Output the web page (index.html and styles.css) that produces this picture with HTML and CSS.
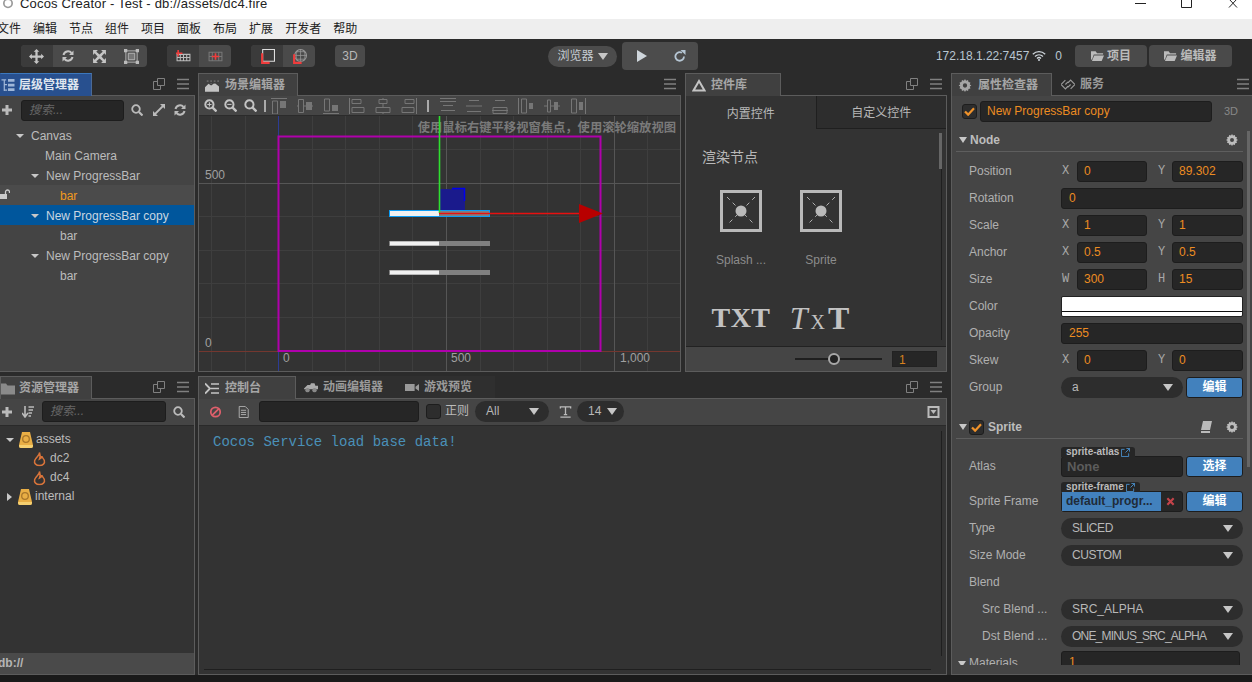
FILE: index.html
```html
<!DOCTYPE html>
<html lang="zh">
<head>
<meta charset="utf-8">
<title>Cocos Creator</title>
<link rel="stylesheet" href="styles.css">
</head>
<body>
<svg class="sprite" aria-hidden="true">
  <symbol id="i-popout" viewBox="0 0 12 12"><path d="M4.500 .5h7v7h-7z M4.500 3.500h-4v8h7v-4" fill="none" stroke="currentColor"/></symbol>
  <symbol id="i-menu" viewBox="0 0 12 12"><path d="M0 1.500h12M0 6h12M0 10.500h12" stroke="currentColor" stroke-width="1.400"/></symbol>
  <symbol id="i-gear" viewBox="0 0 12 12"><path d="M6 0l1 1.600 1.800-.6.400 1.800 1.800.4-.6 1.800L12 6l-1.600 1 .6 1.800-1.800.4-.4 1.800-1.800-.6L6 12l-1-1.600-1.800.6-.4-1.800L1 8.800 1.600 7 0 6l1.600-1L1 3.200l1.800-.4.400-1.800 1.800.6zM6 4a2 2 0 1 0 0 4 2 2 0 0 0 0-4z" fill="currentColor" fill-rule="evenodd"/></symbol>
  <symbol id="i-search" viewBox="0 0 12 12"><circle cx="5" cy="5" r="3.800" fill="none" stroke="currentColor" stroke-width="1.800"/><path d="M8 8l3.500 3.500" stroke="currentColor" stroke-width="2.200"/></symbol>
  <symbol id="i-plus" viewBox="0 0 12 12"><path d="M6 1v10M1 6h10" stroke="currentColor" stroke-width="3"/></symbol>
  <symbol id="i-sync" viewBox="0 0 12 12"><path d="M1.500 5A4.600 4.600 0 0 1 9.500 3M10.500 7A4.600 4.600 0 0 1 2.500 9" fill="none" stroke="currentColor" stroke-width="2"/><path d="M11.500 .5v4.500H7zM.5 11.500V7H5z" fill="currentColor"/></symbol>
  <symbol id="i-expand" viewBox="0 0 12 12"><path d="M2 10l8-8" stroke="currentColor" stroke-width="1.800"/><path d="M7 0h5v5zM0 7v5h5z" fill="currentColor"/></symbol>
  <symbol id="i-folder" viewBox="0 0 14 12"><path d="M0 1h5l1.500 2H13v1.500H3L1 10l-1-.5z M3.500 5.500H14L11.500 11.500H1z" fill="currentColor"/></symbol>
  <symbol id="i-flame" viewBox="0 0 14 16"><path d="M7 1C7.500 4 3 6 1.800 9.500 .8 12.800 3.500 15 7 15s6.200-2.200 5.200-5.500C11.500 7.500 10 7 9.500 5 9 7 8 7.500 7 8c.8-2 .8-5 0-7z" fill="none" stroke="#d9743a" stroke-width="1.600"/></symbol>
  <symbol id="i-db" viewBox="0 0 14 16"><path d="M3 0h8l3 13v1a2 2 0 0 1-2 2H2a2 2 0 0 1-2-2v-1z" fill="#e9ae45"/><path d="M0 13h14v1a2 2 0 0 1-2 2H2a2 2 0 0 1-2-2z" fill="#f5cf70"/><circle cx="7" cy="7" r="3.300" fill="none" stroke="#a8762a" stroke-width="1.300"/></symbol>
  <symbol id="i-node" viewBox="0 0 42 42"><path d="M1.500 1.500h39v39h-39z" fill="none" stroke="#b9b9b9" stroke-width="3"/><path d="M7 7l27 27M35 7L7 35" stroke="#b0b0b0" stroke-dasharray="4 4"/><circle cx="21" cy="21" r="5.500" fill="#b9b9b9"/></symbol>
</svg>

<div class="app">
  <header class="titlebar">
    <svg class="app-logo" viewBox="0 0 12 12"><circle cx="6" cy="4" r="5" fill="none" stroke="#999" stroke-width="2"/></svg>
    <span class="title-text">Cocos Creator - Test - db://assets/dc4.fire</span>
    <div class="window-controls">
      <svg viewBox="0 0 11 8"><path d="M0 3.500h11" stroke="#222"/></svg>
      <svg viewBox="0 0 11 8"><path d="M.5 -1v8.500h10V-1" fill="none" stroke="#222"/></svg>
      <svg viewBox="0 0 11 8"><path d="M2 -1l8 8.500M10 -1L2 7.500" stroke="#222"/></svg>
    </div>
  </header>

  <nav class="menubar">
    <span>文件</span><span>编辑</span><span>节点</span><span>组件</span><span>项目</span><span>面板</span><span>布局</span><span>扩展</span><span>开发者</span><span>帮助</span>
  </nav>

  <div class="toolbar">
    <div class="tool-group four">
      <button class="tool on"><svg viewBox="0 0 16 16"><path d="M8 0l3 3H9.200v3.800H13V5l3 3-3 3V9.200H9.200V13H11l-3 3-3-3h1.800V9.200H3V11L0 8l3-3v1.800h3.800V3H5z" fill="#c4c4c4"/></svg></button>
      <button class="tool"><svg class="sm" viewBox="0 0 12 12"><use href="#i-sync"/></svg></button>
      <button class="tool"><svg viewBox="0 0 14 14"><path d="M1 1h4.500L4 2.500 7 5.200 10 2.500 8.500 1H13v4.500L11.500 4 8.800 7l2.700 3L13 8.500V13H8.500L10 11.500 7 8.800 4 11.500 5.500 13H1V8.500L2.500 10 5.200 7 2.500 4 1 5.500z" fill="#c4c4c4"/></svg></button>
      <button class="tool"><svg viewBox="0 0 16 16"><path d="M2 2h12v12H2z" fill="none" stroke="#bbb"/><path d="M4.500 4.500h7v7h-7z" fill="#777" stroke="#bbb"/><path d="M0 0h3.500v3.500H0zM12.500 0H16v3.500h-3.500zM0 12.500h3.500V16H0zM12.500 12.500H16V16h-3.500z" fill="#bbb"/></svg></button>
    </div>
    <div class="tool-group two">
      <button class="tool on"><svg viewBox="0 0 14 12"><path d="M1 4h12v6H1z M1 7h12 M4 4v6M7 4v6M10 4v6" fill="none" stroke="#bbb"/><path d="M2 0v6M0 3h6" stroke="#f03c3c" stroke-width="1.500"/></svg></button>
      <button class="tool"><svg viewBox="0 0 14 12"><path d="M1 2h12v8H1z M1 6h12 M4 2v8M10 2v8" fill="none" stroke="#777"/><path d="M7 3v6M3.500 6h7" stroke="#f03c3c" stroke-width="1.500"/></svg></button>
    </div>
    <div class="tool-group two">
      <button class="tool on"><svg viewBox="0 0 14 14"><path d="M2.500 .5h11v11h-11z" fill="none" stroke="#ddd"/><path d="M2 4v9h7" fill="none" stroke="#f03c3c" stroke-width="2"/></svg></button>
      <button class="tool"><svg viewBox="0 0 14 14"><circle cx="8" cy="6" r="5.500" fill="none" stroke="#999"/><path d="M2.500 6h11M8 .5v11M4 2.500h8M4 9.500h8M5 1.500C3.500 5 3.500 8 5 11M11 1.500c1.500 3.500 1.500 6.500 0 9.500" fill="none" stroke="#999" stroke-width=".7"/><path d="M2 5v8h7" fill="none" stroke="#f03c3c" stroke-width="2"/></svg></button>
    </div>
    <button class="tool-3d">3D</button>
    <button class="browser-pill">浏览器<i class="caret light"></i></button>
    <div class="play-group">
      <svg viewBox="0 0 12 12"><path d="M1 0l10 6-10 6z" fill="#cfd6dc"/></svg>
      <svg viewBox="0 0 12 12"><path d="M10 6.500A4.300 4.300 0 1 1 8 2.800" fill="none" stroke="#b6c6d4" stroke-width="1.800"/><path d="M6.500 0h5v5z" fill="#b6c6d4"/></svg>
    </div>
    <div class="net">
      <span class="ip">172.18.1.22:7457</span>
      <svg class="wifi" viewBox="0 0 14 10"><path d="M.8 3.200a9 9 0 0 1 12.400 0M3 5.400a6 6 0 0 1 8 0M5 7.400a3 3 0 0 1 4 0" fill="none" stroke="#cfd6dc" stroke-width="1.300"/><circle cx="7" cy="9" r="1" fill="#cfd6dc"/></svg>
      <span class="count">0</span>
    </div>
    <button class="open-btn project"><svg class="ic14" viewBox="0 0 14 12"><use href="#i-folder"/></svg>项目</button>
    <button class="open-btn editor"><svg class="ic14" viewBox="0 0 14 12"><use href="#i-folder"/></svg>编辑器</button>
  </div>

  <main class="workspace">
    <div class="col-left">
      <section class="panel panel-hierarchy">
        <div class="tabs">
          <div class="tab tab-blue w92"><svg class="tab-ic" viewBox="0 0 14 14"><path d="M0 1h5M3 1v12M3 6h3M3 12h3" stroke="#9fb7d8" stroke-width="1.300" fill="none"/><path d="M7 0h7v3H7zM7 5h7v3H7zM7 10h7v3H7z" fill="#9fb7d8"/></svg>层级管理器</div>
          <div class="tab-actions left-actions"><svg viewBox="0 0 12 12"><use href="#i-popout"/></svg><svg viewBox="0 0 12 12"><use href="#i-menu"/></svg></div>
        </div>
        <div class="panel-body body-mid">
          <div class="bar bar-hier">
            <svg class="ic12 plus" viewBox="0 0 12 12"><use href="#i-plus"/></svg>
            <div class="search search-hier">搜索...</div>
            <svg class="ic12" viewBox="0 0 12 12"><use href="#i-search"/></svg>
            <svg class="ic12" viewBox="0 0 12 12"><use href="#i-expand"/></svg>
            <svg class="ic12" viewBox="0 0 12 12"><use href="#i-sync"/></svg>
          </div>
          <ul class="tree">
            <li class="d1"><i class="caret"></i>Canvas</li>
            <li class="d2">Main Camera</li>
            <li class="d2 has-caret"><i class="caret"></i>New ProgressBar</li>
            <li class="d3 hover"><svg class="lock" viewBox="0 0 10 10"><path d="M5.500 5V3a2 2 0 0 1 4 0v1" fill="none" stroke="#ccc" stroke-width="1.300"/><path d="M0 5h7v5H0z" fill="#ccc"/></svg>bar</li>
            <li class="d2 has-caret selected"><i class="caret"></i>New ProgressBar copy</li>
            <li class="d3">bar</li>
            <li class="d2 has-caret"><i class="caret"></i>New ProgressBar copy</li>
            <li class="d3">bar</li>
          </ul>
        </div>
      </section>

      <section class="panel panel-assets">
        <div class="tabs">
          <div class="tab w92"><svg class="tab-ic folder-ic" viewBox="0 0 14 12"><path d="M0 1h5l1.500 2H14v9H0z" fill="currentColor"/></svg>资源管理器</div>
          <div class="tab-actions left-actions"><svg viewBox="0 0 12 12"><use href="#i-popout"/></svg><svg viewBox="0 0 12 12"><use href="#i-menu"/></svg></div>
        </div>
        <div class="panel-body body-dark">
          <div class="bar bar-assets">
            <svg class="ic12 plus" viewBox="0 0 12 12"><use href="#i-plus"/></svg>
            <svg class="ic12" viewBox="0 0 12 12"><path d="M3 0v10M0 7l3 4 3-4" fill="none" stroke="currentColor" stroke-width="1.600"/><path d="M6.500 1H12M6.500 4h4.500M6.500 7H10M6.500 10H9" stroke="currentColor" stroke-width="1.400"/></svg>
            <div class="search search-assets">搜索...</div>
            <svg class="ic12" viewBox="0 0 12 12"><use href="#i-search"/></svg>
          </div>
          <ul class="asset-tree">
            <li class="a1"><i class="caret"></i><svg class="db" viewBox="0 0 14 16"><use href="#i-db"/></svg>assets</li>
            <li class="a2"><svg class="fire" viewBox="0 0 14 16"><use href="#i-flame"/></svg>dc2</li>
            <li class="a2"><svg class="fire" viewBox="0 0 14 16"><use href="#i-flame"/></svg>dc4</li>
            <li class="a1"><i class="caret right"></i><svg class="db" viewBox="0 0 14 16"><use href="#i-db"/></svg>internal</li>
          </ul>
          <footer class="db-path">db://</footer>
        </div>
      </section>
    </div>

    <div class="col-center">
      <div class="row-top">
        <section class="panel panel-scene">
          <div class="tabs">
            <div class="tab w100"><svg class="tab-ic" viewBox="0 0 16 14"><path d="M0 14V9l4-4 3 2 4-3 5 4v6z" fill="#c4c4c4"/><path d="M2 1h2v2H2zM6 1h2v2H6zM10 1h2v2h-2zM14 1h2v2h-2zM6 4h2v1H6zM10 4h2v1h-2z" fill="#666"/></svg>场景编辑器</div>
            <div class="tab-actions"><svg viewBox="0 0 12 12"><use href="#i-menu"/></svg></div>
          </div>
          <div class="panel-body">
            <div class="scene-tools">
              <svg class="zoom-ic" viewBox="0 0 12 12"><use href="#i-search"/><path d="M3 5h4M5 3v4" stroke="#c4c4c4"/></svg>
              <svg class="zoom-ic" viewBox="0 0 12 12"><use href="#i-search"/><path d="M3 5h4" stroke="#c4c4c4"/></svg>
              <svg class="zoom-ic" viewBox="0 0 12 12"><use href="#i-search"/></svg>
              <i class="tool-sep"></i>
              <svg class="align" viewBox="0 0 16 16"><path d="M0 .5h16M1.500 3h5v13h-5z" fill="none" stroke="currentColor"/><path d="M9 3h6v7H9z" fill="currentColor"/></svg>
              <svg class="align" viewBox="0 0 16 16"><path d="M0 8h16" stroke="currentColor"/><path d="M1.500 1.500h5v13h-5z" fill="#454545" stroke="currentColor"/><path d="M9 4h6v8H9z" fill="currentColor"/></svg>
              <svg class="align" viewBox="0 0 16 16"><path d="M0 15.500h16M1.500 1h5v12h-5z" fill="none" stroke="currentColor"/><path d="M9 7h6v6H9z" fill="currentColor"/></svg>
              <svg class="align" viewBox="0 0 16 16"><path d="M.5 0v16M3 1.500h9v4H3zM3 9.500h12v5H3z" fill="none" stroke="currentColor"/></svg>
              <svg class="align" viewBox="0 0 16 16"><path d="M8 0v16" stroke="currentColor"/><path d="M4 1.500h8v4H4zM1 9.500h14v5H1z" fill="#454545" stroke="currentColor"/></svg>
              <svg class="align" viewBox="0 0 16 16"><path d="M15.500 0v16M4 1.500h9v4H4zM1 9.500h12v5H1z" fill="none" stroke="currentColor"/></svg>
              <i class="tool-sep sep-end"></i>
              <svg class="align" viewBox="0 0 16 16"><path d="M0 .5h16M0 3.500h16M3 7.500h10M1 12.500h14" fill="none" stroke="currentColor"/></svg>
              <svg class="align" viewBox="0 0 16 16"><path d="M3 2.500h10M0 8h16M1 13.500h14" fill="none" stroke="currentColor"/></svg>
              <svg class="align" viewBox="0 0 16 16"><path d="M3 2.500h10M1 9.500h14M0 12.500h16M1 9.500v6h14v-6" fill="none" stroke="currentColor"/></svg>
              <svg class="align" viewBox="0 0 16 16"><path d="M.5 0v16M3.500 1h5v14h-5z" fill="none" stroke="currentColor"/><path d="M11 5h4v6h-4z" fill="currentColor"/></svg>
              <svg class="align" viewBox="0 0 16 16"><path d="M0 8h16" stroke="currentColor"/><path d="M3.500 2h3v12h-3z" fill="#454545" stroke="currentColor"/><path d="M10 4h4v8h-4z" fill="currentColor"/></svg>
              <svg class="align" viewBox="0 0 16 16"><path d="M15.500 0v16M1.500 1h5v14h-5z" fill="none" stroke="currentColor"/><path d="M9 4h4v8H9z" fill="currentColor"/></svg>
            </div>
            <svg class="scene-canvas" viewBox="199 116 481 255">
              <path class="grid-minor" d="M211.500 116V371M245.500 116V371M312.500 116V371M345.500 116V371M379.500 116V371M412.500 116V371M480.500 116V371M513.500 116V371M547.500 116V371M580.500 116V371M647.500 116V371M199 149.500H680M199 216.500H680M199 250.500H680M199 283.500H680M199 317.500H680"/>
              <path class="grid-major" d="M446.500 116V371M614.500 116V371M199 183.500H680"/>
              <path class="axis-x-dim" d="M199 351.500H278M601 351.500H680"/>
              <path class="axis-y-dim" d="M278.500 116V136M278.500 352V371"/>
              <rect class="design" x="278.500" y="136.500" width="322" height="214.500"/>
              <text class="coord" x="205" y="179">500</text>
              <text class="coord" x="205" y="347">0</text>
              <text class="coord" x="283" y="362">0</text>
              <text class="coord" x="451" y="362">500</text>
              <text class="coord" x="620" y="362">1,000</text>
              <text class="hint" x="676" y="132">使用鼠标右键平移视窗焦点，使用滚轮缩放视图</text>
              <rect class="bar-track" x="389" y="241" width="101" height="5"/><rect class="bar-fill" x="390" y="241.500" width="49" height="4"/>
              <rect class="bar-track" x="389" y="270" width="101" height="5"/><rect class="bar-fill" x="390" y="270.500" width="49" height="4"/>
              <rect class="gizmo-square" x="440" y="189" width="25" height="24"/>
              <path class="gizmo-corner" d="M452 188.500H464.500V201"/>
              <rect class="bar-track" x="389" y="211" width="101" height="6"/><rect class="bar-fill" x="390" y="211" width="49" height="5"/>
              <rect class="bar-select" x="389.500" y="210.500" width="100" height="6"/>
              <path class="gizmo-y" d="M439.500 116V213"/>
              <path class="gizmo-x" d="M439 213.500H582"/>
              <path class="gizmo-arrow" d="M579 204L603 213.500L579 223Z"/>
            </svg>
          </div>
        </section>

        <section class="panel panel-widgets">
          <div class="tabs">
            <div class="tab w96"><svg class="tab-ic" viewBox="0 0 14 12"><path d="M7 1.500L12.500 11h-11z" fill="none" stroke="#c4c4c4" stroke-width="2"/></svg>控件库</div>
            <div class="tab-actions"><svg viewBox="0 0 12 12"><use href="#i-popout"/></svg><svg viewBox="0 0 12 12"><use href="#i-menu"/></svg></div>
          </div>
          <div class="panel-body">
            <div class="lib-tabs"><div class="lib-tab active">内置控件</div><div class="lib-tab">自定义控件</div></div>
            <div class="lib-content">
              <h3>渲染节点</h3>
              <div class="lib-grid">
                <div class="lib-item"><svg class="node-ic" viewBox="0 0 42 42"><use href="#i-node"/></svg><span>Splash ...</span></div>
                <div class="lib-item"><svg class="node-ic" viewBox="0 0 42 42"><use href="#i-node"/></svg><span>Sprite</span></div>
                <div class="lib-item"><b class="glyph">TXT</b></div>
                <div class="lib-item"><b class="glyph glyph-mix"><em>T</em><small>X</small>T</b></div>
              </div>
              <i class="lib-thumb"></i><i class="lib-track"></i>
            </div>
            <div class="lib-foot">
              <div class="slider"><i></i></div>
              <div class="scale-input">1</div>
            </div>
          </div>
        </section>
      </div>

      <section class="panel panel-console">
        <div class="tabs">
          <div class="tab w98"><svg class="tab-ic" viewBox="0 0 14 12"><path d="M0 1l5 5-5 5" fill="none" stroke="#c4c4c4" stroke-width="1.800"/><path d="M6 1.500h8M6 6h8M6 10.500h8" stroke="#c4c4c4" stroke-width="1.600"/></svg>控制台</div>
          <div class="inactive-strip">
            <div class="tab-off first"><svg class="tab-ic" viewBox="0 0 16 12"><path d="M0 7l4-4h3l1-2h4l1 3h3v4H0z" fill="#aaa"/><circle cx="4" cy="9" r="2.500" fill="#888"/><circle cx="12" cy="9" r="2.500" fill="#888"/></svg>动画编辑器</div>
            <div class="tab-off"><svg class="tab-ic" viewBox="0 0 16 12"><path d="M0 2h11v8H0zM12 5l4-3v8l-4-3z" fill="#999"/></svg>游戏预览</div>
          </div>
          <div class="tab-actions"><svg viewBox="0 0 12 12"><use href="#i-popout"/></svg><svg viewBox="0 0 12 12"><use href="#i-menu"/></svg></div>
        </div>
        <div class="panel-body body-dark">
          <div class="bar bar-console">
            <svg class="ic14" viewBox="0 0 14 14"><circle cx="7" cy="7" r="5.500" fill="none" stroke="#e0606c" stroke-width="2"/><path d="M3 11l8-8" stroke="#e0606c" stroke-width="2"/></svg>
            <svg class="ic14 doc" viewBox="0 0 12 14"><path d="M1 .5h7l3.500 3.500v9.500H1z" fill="none" stroke="#bbb"/><path d="M3 5h6M3 7.500h6M3 10h6" stroke="#bbb"/></svg>
            <div class="console-filter"></div>
            <div class="check-box"></div>
            <span class="regex">正则</span>
            <div class="select sel-all">All<i class="caret light"></i></div>
            <svg class="ic14 font-ic" viewBox="0 0 14 14"><path d="M1 3V1h12v2M7 1v9M5 10h4M1 13h12" fill="none" stroke="#bbb" stroke-width="1.500"/></svg>
            <div class="select sel-size">14<i class="caret light"></i></div>
            <svg class="ic14 collapse" viewBox="0 0 12 12"><path d="M1 1h10v10H1z" fill="none" stroke="#bbb" stroke-width="2"/><path d="M3 4h6L6 8z" fill="#bbb"/></svg>
          </div>
          <div class="console-log">
            <p>Cocos Service load base data!</p>
            <i class="log-v"></i><i class="log-h"></i>
          </div>
        </div>
      </section>
    </div>

    <section class="panel panel-inspector">
      <div class="tabs">
        <div class="tab w101"><svg class="tab-ic" viewBox="0 0 12 12"><use href="#i-gear"/></svg>属性检查器</div>
        <div class="tab-off service"><svg class="tab-ic" viewBox="0 0 16 12"><path d="M5 1L0 6l5 5 3-3M11 11l5-5-5-5-3 3M5 6l3-3M8 9l3-3" fill="none" stroke="#999" stroke-width="1.300"/></svg>服务</div>
        <div class="tab-actions insp-actions"><svg viewBox="0 0 12 12"><use href="#i-menu"/></svg></div>
      </div>
      <div class="panel-body insp-body">
        <div class="name-row">
          <div class="check-box on"><svg viewBox="0 0 12 10"><path d="M1 5l3.500 3.500L11 1.500" fill="none" stroke="#f0922a" stroke-width="2.500"/></svg></div>
          <div class="field name-field">New ProgressBar copy</div>
          <span class="label-3d">3D</span>
        </div>
        <div class="sec-head"><i class="caret small"></i><b>Node</b><svg class="ic12 sec-end" viewBox="0 0 12 12"><use href="#i-gear"/></svg></div>
        <div class="props props-node">
          <div class="prop"><label>Position</label><span class="axis">X</span><div class="field w70">0</div><span class="axis y">Y</span><div class="field grow">89.302</div></div>
          <div class="prop"><label>Rotation</label><div class="field grow wide">0</div></div>
          <div class="prop"><label>Scale</label><span class="axis">X</span><div class="field w70">1</div><span class="axis y">Y</span><div class="field grow">1</div></div>
          <div class="prop"><label>Anchor</label><span class="axis">X</span><div class="field w70">0.5</div><span class="axis y">Y</span><div class="field grow">0.5</div></div>
          <div class="prop"><label>Size</label><span class="axis">W</span><div class="field w70">300</div><span class="axis y">H</span><div class="field grow">15</div></div>
          <div class="prop"><label>Color</label><div class="color-box"></div></div>
          <div class="prop"><label>Opacity</label><div class="field grow wide">255</div></div>
          <div class="prop"><label>Skew</label><span class="axis">X</span><div class="field w70">0</div><span class="axis y">Y</span><div class="field grow">0</div></div>
          <div class="prop"><label>Group</label><div class="select grow">a<i class="caret light"></i></div><button class="blue-btn">编辑</button></div>
        </div>
        <div class="sec-head sprite-head"><i class="caret small"></i><div class="check-box on"><svg viewBox="0 0 12 10"><path d="M1 5l3.500 3.500L11 1.500" fill="none" stroke="#f0922a" stroke-width="2.500"/></svg></div><b>Sprite</b><svg class="ic12 book" viewBox="0 0 12 12"><path d="M3 0h9l-2 9H1zM1 10h9v2H1z" fill="#bbb"/></svg><svg class="ic12 sec-end" viewBox="0 0 12 12"><use href="#i-gear"/></svg></div>
        <div class="props props-sprite">
          <div class="prop has-tag"><label>Atlas</label>
            <div class="field grow ref none"><span class="ref-tag">sprite-atlas<svg viewBox="0 0 10 10"><path d="M4 1.500H.5v8h8V6M5 5l4.500-4.500M6 .5h3.500V4" fill="none" stroke="#4a90cc"/></svg></span>None</div>
            <button class="blue-btn">选择</button></div>
          <div class="prop has-tag tag-gap"><label>Sprite Frame</label>
            <div class="field grow ref frame"><span class="ref-tag">sprite-frame<svg viewBox="0 0 10 10"><path d="M4 1.500H.5v8h8V6M5 5l4.500-4.500M6 .5h3.500V4" fill="none" stroke="#4a90cc"/></svg></span><span class="frame-name">default_progr...</span><svg class="clear" viewBox="0 0 10 10"><path d="M1.500 1.500l7 7M8.500 1.500l-7 7" stroke="#c4434a" stroke-width="2.400"/></svg></div>
            <button class="blue-btn">编辑</button></div>
          <div class="prop"><label>Type</label><div class="select grow"><span class="tight-s">SLICED</span><i class="caret light"></i></div></div>
          <div class="prop"><label>Size Mode</label><div class="select grow"><span class="tight-s">CUSTOM</span><i class="caret light"></i></div></div>
          <div class="prop"><label>Blend</label></div>
          <div class="prop sub"><label>Src Blend ...</label><div class="select grow">SRC_ALPHA<i class="caret light"></i></div></div>
          <div class="prop sub"><label>Dst Blend ...</label><div class="select grow"><span class="tight">ONE_MINUS_SRC_ALPHA</span><i class="caret light"></i></div></div>
          <div class="prop materials"><i class="caret small"></i><label>Materials</label><div class="field grow wide">1</div></div>
        </div>
        <i class="insp-thumb"></i>
      </div>
    </section>
  </main>
</div>
</body>
</html>
```

FILE: styles.css
```css
* { box-sizing: border-box; }
html, body { margin: 0; height: 682px; overflow: hidden; background: #1a1a1a; }
body { font: 12px/1.2 "Liberation Sans", "Noto Sans CJK SC", sans-serif; color: #bcbcbc; }
button { font: inherit; color: inherit; border: 0; padding: 0; margin: 0; }
ul { list-style: none; margin: 0; padding: 0; }
p, h3 { margin: 0; }
.sprite { position: absolute; width: 0; height: 0; }
.app { display: flex; flex-direction: column; height: 682px; }

.caret { display: inline-block; width: 0; height: 0; border-style: solid; border-width: 4px 4px 0; border-color: #c8c8c8 transparent transparent; }
.caret.right { border-width: 4px 0 4px 5px; border-color: transparent transparent transparent #c8c8c8; }
.caret.light { border-width: 7px 5px 0; border-color: #c6c6c6 transparent transparent; }
.caret.small { border-width: 6px 4px 0; }

.titlebar { height: 19px; flex: none; background: #fff; display: flex; overflow: hidden; color: #222; font-size: 13px; line-height: 8px; }
.app-logo { width: 12px; height: 10px; margin: 0 6px 0 2px; }
.title-text { letter-spacing: .18px; }
.window-controls { margin-left: auto; display: flex; gap: 35px; padding-right: 14px; }
.window-controls svg { width: 11px; height: 8px; }

.menubar { height: 20px; flex: none; background: #eee; color: #222; display: flex; gap: 12px; align-items: center; white-space: nowrap; }
.menubar span:first-child { margin-left: -3px; }

.toolbar { height: 34px; flex: none; background: #2b2b2b; display: flex; align-items: center; padding: 0 20px 0 21px; }
.tool-group { height: 22px; display: flex; background: #4a4a4a; border-radius: 4px; overflow: hidden; margin-right: 20px; }
.tool-group.four { width: 126px; }
.tool-group.two { width: 64px; }
.tool { flex: 1; background: transparent; display: flex; align-items: center; justify-content: center; color: #c4c4c4; }
.tool.on { background: #3b3b3b; }
.tool svg { width: 15px; height: 15px; }
.tool svg.sm { width: 12px; height: 12px; }
.tool-3d { width: 30px; height: 22px; background: #4a4a4a; border-radius: 4px; font-size: 12px; color: #b8b8b8; }
.browser-pill { margin-left: 183px; width: 69px; height: 21px; border-radius: 11px; background: #4c4c4c; color: #c6ccd2; display: flex; align-items: center; justify-content: center; gap: 4px; font-size: 12px; }
.play-group { margin-left: 5px; width: 76px; height: 28px; background: #4c4c4c; border-radius: 4px; display: flex; align-items: center; gap: 26px; padding-left: 14px; }
.play-group svg { width: 12px; height: 12px; }
.net { margin-left: auto; display: flex; align-items: center; color: #b9c6d2; }
.wifi { width: 14px; height: 10px; margin: 0 9px 0 3px; }
.count { margin-right: 13px; }
.open-btn { height: 22px; background: #4a4a4a; border-radius: 4px; display: flex; align-items: center; justify-content: center; gap: 3px; color: #bbb; font-weight: bold; }
.open-btn.project { width: 72px; margin-right: 2px; }
.open-btn.editor { width: 83px; }
.ic14 { width: 13px; height: 12px; flex: none; }

.workspace { height: 602px; flex: none; background: #2b2b2b; display: grid; grid-template-columns: 198px 753px 301px; }
.col-left { display: flex; flex-direction: column; width: 195px; gap: 3px; }
.col-center { display: flex; flex-direction: column; width: 749px; gap: 4px; }
.row-top { display: flex; gap: 4px; height: 299px; flex: none; }
.panel { display: flex; flex-direction: column; min-width: 0; }
.panel-hierarchy { height: 299px; flex: none; }
.panel-assets { flex: 1; min-height: 0; margin-top: 1px; }
.panel-scene { width: 483px; flex: none; }
.panel-widgets { flex: 1; }
.panel-console { flex: 1; min-height: 0; }
.panel-inspector { height: 602px; }

.tabs { height: 22px; flex: none; display: flex; align-items: stretch; color: #999; }
.tab { display: flex; align-items: center; background: #404040; border: 1px solid #5c5c5c; border-bottom: 0; font-weight: bold; color: #a6a6a6; padding: 1px 0 0 6px; white-space: nowrap; position: relative; z-index: 1; height: 23px; flex: none; }
.tab-blue { background: #28508f; border-color: #3c78bd #4b6a96 transparent #28508f; color: #dfe6ef; padding-left: 0; }
.w92 { width: 92px; } .w100 { width: 100px; } .w96 { width: 96px; } .w98 { width: 98px; } .w101 { width: 101px; }
.tab-ic { width: 14px; height: 13px; margin-right: 6px; flex: none; }
.tab-blue .tab-ic, .folder-ic { margin-right: 4px; }
.panel-widgets .tab-ic { margin-right: 5px; }
.folder-ic { margin-left: -6px; color: #8a8a8a; }
.tab-actions { margin-left: auto; display: flex; align-items: center; gap: 12px; padding-right: 5px; color: #808080; }
.tab-actions svg { width: 12px; height: 12px; }
.left-actions { padding-right: 6px; }
.insp-actions { padding-right: 3px; }
.inactive-strip { display: flex; align-items: center; background: #2f2f2f; width: 199px; height: 22px; color: #a0a0a0; font-weight: bold; padding-top: 1px; }
.tab-off { display: flex; align-items: center; font-weight: bold; color: #9a9a9a; white-space: nowrap; }
.tab-off .tab-ic { margin-right: 5px; }
.tab-off.first { margin-left: 8px; margin-right: 22px; }
.service { margin-left: 9px; padding-top: 1px; }

.panel-body { flex: 1; min-height: 0; border: 1px solid #5c5c5c; background: #333; display: flex; flex-direction: column; position: relative; overflow: hidden; }
.panel-hierarchy .panel-body, .panel-assets .panel-body { border-left: 0; }
.body-mid { background: #444; }
.body-dark { background: #333; }
.bar { flex: none; display: flex; align-items: center; color: #bbb; background: #454545; }
.ic12 { width: 12px; height: 12px; flex: none; }
.search { background: #262626; border: 1px solid #1d1d1d; border-radius: 3px; height: 21px; font-style: italic; color: #666; display: flex; align-items: center; padding-left: 7px; flex: none; }
.bar-hier { height: 28px; margin-bottom: 1px; padding-left: 1px; background: transparent; }
.search-hier { width: 103px; margin: 0 7px 0 8px; }
.bar-hier .ic12 + .ic12 { margin-left: 9.500px; }
.bar-hier .search + .ic12 { margin-left: 0; }
.tree li { height: 20px; padding-top: 2px; position: relative; white-space: nowrap; display: flex; align-items: center; }
.d1 { padding-left: 16px; }
.d1 .caret { margin-right: 7px; }
.d2 { padding-left: 45px; }
.d2.has-caret { padding-left: 31px; }
.d2 .caret { margin-right: 7px; }
.d3 { padding-left: 60px; }
.tree .hover { background: #4b4b4b; color: #f09a1e; }
.tree .selected { background: #00569c; color: #c9d6e2; }
.lock { position: absolute; left: 0; top: 4px; width: 10px; height: 10px; }

.bar-assets { height: 28px; margin-top: -1px; padding-left: 1px; border-bottom: 1px solid #2a2a2a; }
.bar-assets .ic12 + .ic12 { margin-left: 9px; }
.search-assets { width: 124px; margin: 0 7px 0 8px; }
.asset-tree { flex: 1; padding-top: 4px; }
.asset-tree li { height: 19px; display: flex; align-items: center; white-space: nowrap; }
.a1 { padding-left: 6px; }
.a1 .caret { width: 0; margin-right: 5px; }
.a1 .caret.right { margin-left: 1px; margin-right: 6px; }
.db { width: 14px; height: 16px; margin-right: 3px; }
.a2 { padding-left: 33px; }
.fire { width: 13px; height: 16px; margin-right: 4px; }
.db-path { height: 21px; flex: none; background: #4a4a4a; font-weight: bold; padding-top: 3px; text-indent: -2px; color: #b5b5b5; }

.scene-tools { height: 20px; flex: none; background: #454545; border-bottom: 1px solid #2b2b2b; display: flex; align-items: center; color: #767676; padding-left: 5px; }
.zoom-ic { width: 13px; height: 13px; margin-right: 7px; flex: none; color: #c4c4c4; }
.tool-sep { width: 2px; height: 12px; background: #aaa; flex: none; margin-right: 5px; }
.tool-sep.sep-end { margin-right: 11px; }
.align { width: 16px; height: 16px; margin-right: 10px; flex: none; }
.scene-canvas { display: block; width: 481px; height: 255px; background: #333; flex: none; }
.grid-minor { stroke: #3e3e3e; fill: none; }
.grid-major { stroke: #565656; fill: none; }
.axis-x-dim { stroke: #74372f; stroke-width: 1; }
.axis-y-dim { stroke: #2c3c94; stroke-width: 1; }
.design { fill: none; stroke: #b000ac; stroke-width: 2; }
.coord { fill: #a0a0a0; font-size: 12px; }
.hint { fill: #7a7a7a; font-size: 12.300px; font-weight: bold; text-anchor: end; }
.bar-track { fill: #808080; }
.bar-fill { fill: #f0f0f0; }
.bar-select { fill: none; stroke: #0a9cf5; }
.gizmo-square { fill: #1a1a8c; }
.gizmo-corner { fill: none; stroke: #0000ee; stroke-width: 1.500; }
.gizmo-y { stroke: #2fe02f; stroke-width: 1.600; }
.gizmo-x { stroke: #e81010; stroke-width: 1.600; }
.gizmo-arrow { fill: #b80000; }

.lib-tabs { height: 33px; flex: none; display: flex; }
.lib-tab { flex: 1; display: flex; align-items: center; justify-content: center; padding-top: 3px; background: #2d2d2d; border-left: 1px solid #1f1f1f; border-bottom: 1px solid #1f1f1f; color: #b8b8b8; }
.lib-tab.active { background: #333; border: 0; }
.lib-content { flex: 1; min-height: 0; position: relative; overflow: hidden; padding: 19px 0 0 16px; border-bottom: 1px solid #222; }
.lib-content h3 { font-size: 14px; font-weight: normal; color: #b8b8b8; line-height: 18px; }
.lib-grid { display: grid; grid-template-columns: 80px 80px; grid-auto-rows: 130px; margin: 24px 0 0 -1px; }
.lib-item { display: flex; flex-direction: column; align-items: center; color: #8c8c8c; }
.node-ic { width: 42px; height: 42px; margin-bottom: 21px; }
.glyph { font: bold 28px/1 "Liberation Serif", serif; color: #c2c2c2; letter-spacing: .5px; margin-top: -16px; white-space: nowrap; }
.glyph em { font-weight: normal; font-style: italic; font-size: 32px; }
.glyph small { font-size: 20px; font-weight: normal; }
.glyph-mix { font-size: 32px; letter-spacing: 3px; margin-top: -18px; }
.lib-thumb { position: absolute; right: 4px; top: 4px; width: 3px; height: 36px; background: #666; }
.lib-track { position: absolute; right: 4px; top: 40px; width: 1px; bottom: 6px; background: #1f1f1f; }
.lib-foot { height: 24px; flex: none; background: #454545; display: flex; align-items: center; padding-left: 109px; }
.slider { width: 87px; height: 2px; background: #1f1f1f; position: relative; }
.slider i { position: absolute; left: 33px; top: -5px; width: 12px; height: 12px; border-radius: 50%; background: #222; border: 2px solid #a8a8a8; }
.scale-input { width: 45px; height: 16px; margin-left: 10px; background: #262626; color: #d9811e; line-height: 16px; padding-left: 6px; border: 1px solid #222; }

.bar-console { height: 28px; margin-top: -1px; border-bottom: 1px solid #2a2a2a; padding-left: 10px; }
.doc { margin-left: 15px; }
.console-filter { width: 160px; height: 21px; margin-left: 9px; background: #262626; border: 1px solid #1d1d1d; border-radius: 3px; flex: none; }
.check-box { width: 15px; height: 15px; background: #2d2d2d; border: 1px solid #1d1d1d; border-radius: 3px; flex: none; display: flex; align-items: center; justify-content: center; }
.check-box svg { width: 11px; height: 9px; }
.bar-console .check-box { margin-left: 7px; }
.regex { margin-left: 4px; }
.select { height: 21px; background: #2d2d2d; border-radius: 11px; display: flex; align-items: center; justify-content: space-between; padding: 0 10px 0 11px; color: #b8b8b8; white-space: nowrap; }
.sel-all { width: 74px; margin-left: 6px; flex: none; }
.font-ic { margin-left: 10px; }
.sel-size { width: 47px; margin-left: 5px; flex: none; padding: 0 7px 0 11px; }
.collapse { margin-left: auto; margin-right: 6px; }
.console-log { flex: 1; min-height: 0; position: relative; padding: 8px 0 0 14px; }
.console-log p { font: 14px/16px "Liberation Mono", monospace; color: #4a90b8; }
.log-v { position: absolute; right: 4px; top: 5px; width: 1px; height: 225px; background: #1f1f1f; }
.log-h { position: absolute; left: 5px; right: 15px; bottom: 4px; height: 1px; background: #1f1f1f; }

.insp-body { background: #454545; padding-right: 9px; border-right: 0; }
.insp-thumb { position: absolute; right: 2px; top: 35px; width: 3px; height: 336px; background: #666; }
.name-row { height: 21px; flex: none; margin-top: 5px; display: flex; align-items: center; padding-left: 10px; }
.name-field { width: 232px; flex: none; margin-left: 3px; }
.label-3d { margin-left: 12px; color: #888; font-size: 11px; }
.field { height: 21px; background: #262626; border: 1px solid #1d1d1d; border-radius: 3px; color: #ec8c22; display: flex; align-items: center; padding-left: 6px; white-space: nowrap; position: relative; }
.sec-head { height: 23px; flex: none; margin: 7px 0 0 4px; border-bottom: 1px solid #5e5e5e; display: flex; align-items: center; padding-left: 3px; position: relative; }
.sec-head b { color: #bdbdbd; margin-left: 3px; }
.sec-end { margin-left: auto; margin-right: 5px; }
.book { margin-left: auto; margin-right: 14px; }
.book + .sec-end { margin-left: 0; }
.props { display: flex; flex-direction: column; gap: 6px; padding-left: 17px; flex: none; }
.props-node { margin-top: 9px; }
.prop { height: 21px; flex: none; display: flex; align-items: center; }
.prop label { width: 92px; flex: none; white-space: nowrap; color: #b0b0b0; }
.axis { width: 16px; flex: none; font-family: "Liberation Mono", monospace; color: #a8a8a8; padding-left: 1px; }
.axis.y { width: 25px; padding-left: 11px; }
.w70 { width: 70px; flex: none; }
.grow { flex: 1; min-width: 0; }
.wide { padding-left: 7px; }
.color-box { flex: 1; height: 21px; background: linear-gradient(#fff 0 14px, #111 14px 15px, #fff 15px 19px, #222 19px); border: 1px solid #222; border-radius: 2px; }
.blue-btn { width: 57px; height: 21px; margin-left: 3px; flex: none; background: #4281bd; border: 1px solid #1d1d1d; border-radius: 3px; color: #fff; font-weight: bold; }
.sprite-head { margin-top: 18px; }
.sprite-head .check-box { margin-left: 2px; }
.sprite-head b { margin-left: 4px; }
.props-sprite { padding-top: 17px; height: 226px; overflow: hidden; }
.tag-gap { margin-top: 8px; }
.ref-tag { position: absolute; left: -1px; bottom: 100%; height: 10px; padding: 0 5px; background: #262626; color: #bbb; font-size: 10px; font-weight: bold; line-height: 10px; border-radius: 3px 3px 0 0; display: flex; align-items: center; gap: 2px; }
.ref-tag svg { width: 9px; height: 9px; }
.none { color: #5c5c5c; font-size: 13px; font-weight: bold; padding-left: 5px; }
.none .ref-tag { font-size: 10px; }
.frame { padding: 0; }
.frame-name { width: 99px; height: 19px; background: #4281bd; color: #1f2b38; font-weight: bold; line-height: 19px; padding-left: 4px; }
.clear { width: 9px; height: 9px; margin-left: 5px; }
.sub { padding-left: 13px; }
.sub label { width: 79px; }
.tight { letter-spacing: -.8px; }
.tight-s { letter-spacing: -.4px; }
.materials { position: relative; }
.materials .caret { position: absolute; left: -11px; top: 8px; }
.materials .field { margin-right: 3px; height: 26px; align-items: flex-start; padding-top: 3px; }
```
